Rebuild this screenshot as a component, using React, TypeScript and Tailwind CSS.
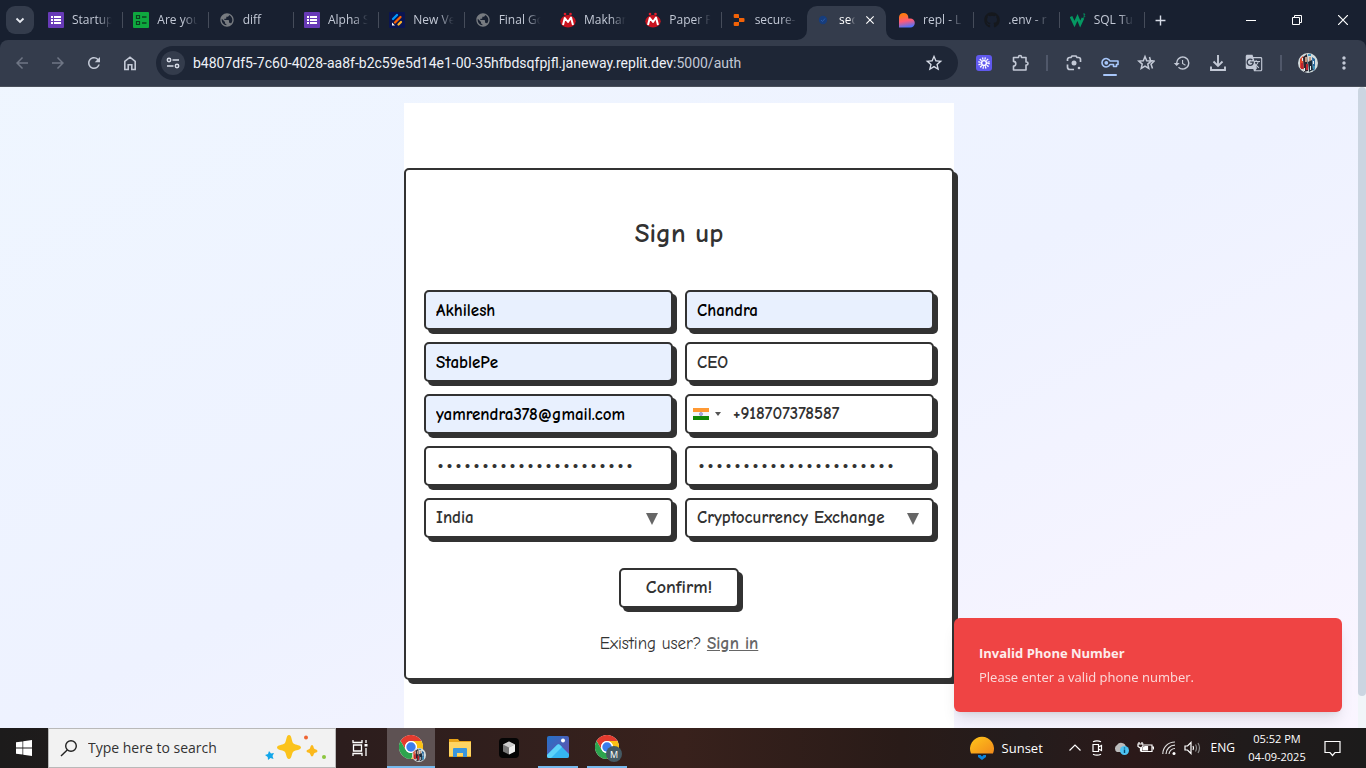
import React from "react";
import {
  MdArrowBack,
  MdArrowForward,
  MdRefresh,
  MdStarBorder,
  MdHistory,
  MdGTranslate,
  MdMoreVert,
  MdAdd,
  MdClose,
  MdPublic,
} from "react-icons/md";
import { FaGithub } from "react-icons/fa";

const ListIcon = () => (
  <svg viewBox="0 0 16 16" className="size-4">
    <rect width="16" height="16" rx="1" fill="#673ab7" />
    <path d="M3 4h2v2H3zM6 4h7v2H6zM3 7h2v2H3zM6 7h7v2H6zM3 10h2v2H3zM6 10h7v2H6z" fill="#fff" />
  </svg>
);

const ChecklistIcon = () => (
  <svg viewBox="0 0 16 16" className="size-4">
    <rect width="16" height="16" rx="1" fill="#0fa83f" />
    <path d="M3.5 3.5h3v3h-3zM3.5 9.5h3v3h-3z" fill="none" stroke="#0b4020" strokeWidth="1.2" />
    <path d="M9 5h4.500M9 11h4.500" stroke="#0b4020" strokeWidth="1.600" />
  </svg>
);

const GlobeIcon = () => <MdPublic className="size-4 text-[#777b80]" />;

const VentureIcon = () => (
  <svg viewBox="0 0 16 16" className="size-4">
    <rect width="16" height="16" rx="1" fill="#0a1551" />
    <g strokeLinecap="round" strokeWidth="2.300">
      <path d="M4 7 8 3" stroke="#0099ff" />
      <path d="M6 10.500 11.500 5" stroke="#ff6100" />
      <path d="M9.500 12.500 12 10" stroke="#ffb629" />
    </g>
    <path d="M3 10.500v3h3z" fill="#fff" />
  </svg>
);

const MakhanaIcon = () => (
  <svg viewBox="0 0 16 16" className="size-4">
    <circle cx="5" cy="2" r="1.300" fill="#e21d2b" />
    <circle cx="10.500" cy="2" r="1.300" fill="#e21d2b" />
    <ellipse cx="8" cy="9.300" rx="7.700" ry="6.200" fill="#c9131f" />
    <path d="M3 13 4.800 6 8 10 11 5.500 13 13" fill="none" stroke="#fff" strokeWidth="2" strokeLinejoin="round" />
  </svg>
);

const ReplitIcon = () => (
  <svg viewBox="0 0 16 16" className="size-4">
    <path
      d="M3.700 2H7a1 1 0 0 1 1 1v3H3.700a1 1 0 0 1-1-1V3a1 1 0 0 1 1-1zM8 6h4.500a1 1 0 0 1 1 1v2a1 1 0 0 1-1 1H8zM3.700 10H8v3a1 1 0 0 1-1 1H3.700a1 1 0 0 1-1-1v-2a1 1 0 0 1 1-1z"
      fill="#f26207"
    />
  </svg>
);

const HeartIcon = () => (
  <svg viewBox="0 0 16 16" className="size-4">
    <defs>
      <linearGradient id="heart" x1="0.300" y1="0" x2="0.500" y2="1">
        <stop offset="0.100" stopColor="#ff7a10" />
        <stop offset="0.550" stopColor="#ff5a78" />
        <stop offset="1" stopColor="#4b73ff" />
      </linearGradient>
    </defs>
    <path d="M0 15.500V5a4.700 4.700 0 0 1 9.300 0v1.500h2a4.500 4.500 0 0 1 0 9z" fill="url(#heart)" />
  </svg>
);

const SchoolsIcon = () => (
  <svg viewBox="0 0 16 16" className="size-4">
    <path d="M1 4.500 4.500 12 7.500 5.500 10.200 12 13 6" fill="none" stroke="#059862" strokeWidth="2.800" />
    <path d="M13 2h2l-1 1.500q1.500.5.5 1.500l-1.500.2" fill="none" stroke="#059862" strokeWidth=".8" />
  </svg>
);

const ShieldDotIcon = () => (
  <svg viewBox="0 0 16 16" className="size-4">
    <circle cx="8" cy="8" r="4.200" fill="#173d7c" />
    <path d="m6 8 1.500 1.500L10 6.500" stroke="#2c5ba6" fill="none" />
  </svg>
);

type TabData = { title: string; icon: React.ReactNode };

const tabsBefore: TabData[] = [
  { title: "Startup", icon: <ListIcon /> },
  { title: "Are you", icon: <ChecklistIcon /> },
  { title: "diff", icon: <GlobeIcon /> },
  { title: "Alpha S", icon: <ListIcon /> },
  { title: "New Ve", icon: <VentureIcon /> },
  { title: "Final Go", icon: <GlobeIcon /> },
  { title: "Makhan", icon: <MakhanaIcon /> },
  { title: "Paper P", icon: <MakhanaIcon /> },
  { title: "secure-", icon: <ReplitIcon /> },
];

const tabsAfter: TabData[] = [
  { title: "repl - L", icon: <HeartIcon /> },
  { title: ".env - r", icon: <FaGithub className="size-4 text-[#15181d]" /> },
  { title: "SQL Tu", icon: <SchoolsIcon /> },
];

function Tab({ title, icon, divider = true }: TabData & { divider?: boolean }) {
  return (
    <button className="flex h-8 min-w-0 flex-1 items-center gap-2 pl-[10px] text-left">
      <span className="shrink-0">{icon}</span>
      <span className="w-11 whitespace-nowrap text-[#c3c9d6] [mask-image:linear-gradient(to_right,black_60%,transparent_95%)]">
        {title}
      </span>
      <span className={divider ? "ml-auto h-4 w-px bg-[#454c5a]" : "hidden"} />
    </button>
  );
}

function TabStrip() {
  return (
    <div className="flex h-10 items-center bg-[#182030] pl-[6px] text-xs">
      <button aria-label="Search tabs" className="mr-1 flex size-7 shrink-0 items-center justify-center rounded-[9px] bg-[#343c4c]">
        <svg viewBox="0 0 12 12" className="size-3">
          <path d="m2.500 4.500 3.500 3.500 3.500-3.500" fill="none" stroke="#e6e9f0" strokeWidth="1.800" />
        </svg>
      </button>
      <div className="flex w-[768px]">
        {tabsBefore.map((t, i) => (
          <Tab key={i} {...t} divider={i < 8} />
        ))}
      </div>
      <div className="relative ml-px mr-[3px] flex h-[34px] w-[79px] shrink-0 items-center self-end rounded-t-[10px] bg-[#343c4c] pb-[6px] pl-2">
        <svg viewBox="0 0 10 10" className="absolute -left-[10px] bottom-0 size-[10px]">
          <path d="M10 0v10H0A10 10 0 0 0 10 0z" fill="#343c4c" />
        </svg>
        <svg viewBox="0 0 10 10" className="absolute -right-[10px] bottom-0 size-[10px]">
          <path d="M0 0v10h10A10 10 0 0 1 0 0z" fill="#343c4c" />
        </svg>
        <ShieldDotIcon />
        <span className="ml-2 w-[18px] text-white [mask-image:linear-gradient(to_right,black_55%,transparent_90%)]">sec</span>
        <button aria-label="Close tab" className="ml-[6px]">
          <MdClose className="size-[14px] text-white" />
        </button>
      </div>
      <div className="flex w-64">
        {tabsAfter.map((t, i) => (
          <Tab key={i} {...t} />
        ))}
      </div>
      <button aria-label="New tab" className="ml-[7px]">
        <MdAdd className="size-[17px] text-[#d6dbe6]" />
      </button>
      <div className="ml-auto flex">
        <button aria-label="Minimize" className="flex h-10 w-[46px] items-center justify-center">
          <svg viewBox="0 0 10 10" className="size-[10px]"><path d="M0 5.500h10" stroke="#fff" /></svg>
        </button>
        <button aria-label="Restore" className="flex h-10 w-[46px] items-center justify-center">
          <svg viewBox="0 0 10 10" className="size-[10px]" fill="none" stroke="#fff">
            <path d="M.5 2.500h7v7h-7zM2.500 2V.5h7v7H8" />
          </svg>
        </button>
        <button aria-label="Close" className="flex h-10 w-[46px] items-center justify-center">
          <svg viewBox="0 0 10 10" className="size-[10px]"><path d="m0 0 10 10M10 0 0 10" stroke="#fff" strokeWidth="1.200" /></svg>
        </button>
      </div>
    </div>
  );
}

function ToolButton({ label, children }: { label: string; children: React.ReactNode }) {
  return (
    <button aria-label={label} className="relative flex h-9 w-9 shrink-0 items-center justify-center text-[#c3c9d6]">
      {children}
    </button>
  );
}

const ToolDivider = () => <span className="mx-2 h-4 w-[2px] shrink-0 bg-[#50586a]" />;

function Avatar({ className }: { className: string }) {
  return (
    <svg viewBox="0 0 20 20" className={className}>
      <defs>
        <clipPath id="face"><circle cx="10" cy="10" r="10" /></clipPath>
      </defs>
      <g clipPath="url(#face)">
        <rect width="20" height="20" fill="#d3dcdd" />
        <path d="M2 6l3-3 1 13-4-1z" fill="#e2492f" />
        <path d="M5 4l4-3 1 17-4 1z" fill="#2a2530" />
        <path d="M7 4h2v5H7zM11 4h2v5h-2z" fill="#c39a82" />
        <path d="M10 9l4-2 1 10-4 2z" fill="#1c2c3a" />
        <path d="M14 4l3 2v10l-2 2z" fill="#27679c" />
        <path d="M3 10h2v6H3zM8 11h2v6H8z" fill="#bd2430" />
        <path d="M4 5h1v3H4zM15 8h1v3h-1zM12 13h1v4h-1zM6 15h1v3H6z" fill="#e8eef0" />
        <path d="M15 13h2v3h-2zM10 1h3v2h-3z" fill="#3f93ba" />
      </g>
    </svg>
  );
}

function Toolbar() {
  return (
    <div className="bg-[#182030]">
      <div className="flex h-[47px] items-center rounded-t-lg border-b border-[#4a505b] bg-[#343c4c] px-1">
        <button aria-label="Back" className="flex h-9 w-9 items-center justify-center text-[#6f7685]"><MdArrowBack className="size-[18px]" /></button>
        <button aria-label="Forward" className="flex h-9 w-9 items-center justify-center text-[#6f7685]"><MdArrowForward className="size-[18px]" /></button>
        <ToolButton label="Reload"><MdRefresh className="size-[18px]" /></ToolButton>
        <ToolButton label="Home">
          <svg viewBox="0 0 16 16" className="size-4" fill="none" stroke="currentColor" strokeWidth="1.600">
            <path d="M2.800 6.300 8 2.200l5.200 4.100v8.200h-3.400V9.800H6.200v4.700H2.800z" />
          </svg>
        </ToolButton>
        <div className="mx-2 flex h-[34px] min-w-0 flex-1 items-center rounded-full bg-[#1e2636] pl-[5px] pr-[14px]">
          <button aria-label="View site information" className="mr-2 flex size-6 shrink-0 items-center justify-center rounded-full bg-[#343c4c]">
            <svg viewBox="0 0 14 14" className="size-[14px]" fill="none" stroke="#d6dbe6" strokeWidth="1.500">
              <circle cx="3" cy="4" r="1.700" /><path d="M6.500 4H13M1 10h6.500" /><circle cx="11" cy="10" r="1.700" />
            </svg>
          </button>
          <div className="flex-1 overflow-hidden whitespace-nowrap font-[Roboto,sans-serif] text-sm text-[#c3c9d6]">
            <span className="text-[#eef1f7]">b4807df5-7c60-4028-aa8f-b2c59e5d14e1-00-35hfbdsqfpjfl.janeway.replit.dev</span>:5000/auth
          </div>
          <button aria-label="Bookmark this tab"><MdStarBorder className="size-5 text-[#d6dbe6]" /></button>
        </div>
        <ToolButton label="Assistant extension">
          <svg viewBox="0 0 16 16" className="size-4">
            <rect width="16" height="16" rx="3" fill="#6059ee" />
            <circle cx="8" cy="8" r="4.500" fill="none" stroke="#fff" strokeWidth="2.600" strokeDasharray="1.180 1.176" />
            <circle cx="8" cy="8" r="2.400" fill="none" stroke="#fff" strokeWidth="1.400" />
          </svg>
        </ToolButton>
        <ToolButton label="Extensions">
          <svg viewBox="0 0 18 18" className="size-[18px]" fill="none" stroke="currentColor" strokeWidth="1.600" strokeLinejoin="round">
            <path d="M2.500 3.500h5V3a1.500 1.500 0 0 1 3 0v.5H15V8h.5a1.500 1.500 0 0 1 0 3H15v5H2.500v-4a2.300 2.300 0 0 0 0-4.600z" />
          </svg>
        </ToolButton>
        <ToolDivider />
        <ToolButton label="Search with Lens">
          <svg viewBox="0 0 16 16" className="size-4" fill="none" stroke="currentColor" strokeWidth="1.700">
            <path d="M1.500 6V4.500a2 2 0 0 1 2-2h1.500l1-1.500h4l1 1.500h1.500a2 2 0 0 1 2 2V7M1.500 9.500V12a2.500 2.500 0 0 0 2.500 2.500h4" />
            <circle cx="8" cy="8" r="2.500" fill="currentColor" stroke="none" /><circle cx="13" cy="13" r="1.300" fill="currentColor" stroke="none" />
          </svg>
        </ToolButton>
        <ToolButton label="Manage passwords">
          <svg viewBox="0 0 18 12" className="h-3 w-[18px]" fill="none" stroke="#a8c7fa" strokeWidth="1.600">
            <path d="M9 4h8v3.500h-1.500V9.500h-3V7.500H9A4.200 4.200 0 1 1 9 4z" strokeLinejoin="round" />
            <circle cx="5.300" cy="5.800" r="1.100" fill="#a8c7fa" />
          </svg>
          <span className="absolute bottom-[5px] h-[2px] w-[14px] rounded bg-[#a8c7fa]" />
        </ToolButton>
        <ToolButton label="Bookmarks">
          <svg viewBox="0 0 18 18" className="size-[18px]" fill="none" stroke="currentColor" strokeWidth="1.500">
            <path d="m8 2.500 1.700 4.200 4.500.4-3.400 3 1 4.400L8 12.200l-3.800 2.300 1-4.400-3.400-3 4.500-.4z" />
            <path d="m12.500 3 1 3.500 3.500.6-3 3 1.500 4.500" />
          </svg>
        </ToolButton>
        <ToolButton label="History"><MdHistory className="size-[18px]" /></ToolButton>
        <ToolButton label="Downloads">
          <svg viewBox="0 0 18 18" className="size-[18px]" fill="none" stroke="currentColor" strokeWidth="1.900">
            <path d="M9 1v10.500M4.500 7.500 9 12l4.500-4.500M2 12.500V16h14v-3.500" />
          </svg>
        </ToolButton>
        <ToolButton label="Translate"><MdGTranslate className="size-[18px]" /></ToolButton>
        <ToolDivider />
        <ToolButton label="Profile"><Avatar className="size-5" /></ToolButton>
        <ToolButton label="More options"><MdMoreVert className="size-5" /></ToolButton>
      </div>
    </div>
  );
}

const fieldBox = "h-10 w-full rounded-[5px] border-2 border-[#323232] px-[10px] font-bold shadow-[4px_4px_#323232] outline-none";

function TextField({ label, value, type = "text", filled = false }: { label: string; value: string; type?: string; filled?: boolean }) {
  return (
    <input
      aria-label={label}
      type={type}
      defaultValue={value}
      className={
        fieldBox +
        (filled ? " bg-[#e8f0fe] text-black" : " bg-white text-[#323232]") +
        (type === "password" ? " pt-[2px] font-['Liberation_Mono',monospace] text-[15px] font-normal" : " text-[17px]")
      }
    />
  );
}

function SelectField({ label, value }: { label: string; value: string }) {
  return (
    <div className="relative">
      <select aria-label={label} className={fieldBox + " appearance-none bg-white text-[17px] text-[#323232]"}>
        <option>{value}</option>
      </select>
      <svg viewBox="0 0 12 12" className="pointer-events-none absolute right-[15px] top-[15px] size-3">
        <path d="M0 0h12L6 12z" fill="#666" />
      </svg>
    </div>
  );
}

function PhoneField() {
  return (
    <div className="flex h-10 items-center rounded-[5px] border-2 border-[#323232] bg-white pl-[6px] shadow-[4px_4px_#323232]">
      <button type="button" aria-label="Country: India" className="flex items-center gap-[6px]">
        <svg viewBox="0 0 16 12" className="h-3 w-4">
          <path d="M0 0h16v4H0z" fill="#ff9933" /><path d="M0 4h16v4H0z" fill="#f4f4fb" /><path d="M0 8h16v4H0z" fill="#128807" />
          <circle cx="8" cy="6" r="1.600" fill="#a9a9dc" stroke="#7070b8" strokeWidth=".5" />
        </svg>
        <svg viewBox="0 0 6 4" className="h-1 w-[6px]"><path d="M0 0h6L3 4z" fill="#555" /></svg>
      </button>
      <input aria-label="Phone number" type="tel" defaultValue="+918707378587" className="ml-3 min-w-0 flex-1 bg-transparent text-[17px] font-bold text-[#323232] outline-none" />
    </div>
  );
}

function SignUpCard() {
  return (
    <form className="flex flex-col items-center rounded-[5px] border-2 border-[#323232] bg-white px-[18px] pb-[22px] pt-[42px] font-['Comic_Sans_MS','Comic_Neue','Open_Sans',sans-serif] text-[#323232] shadow-[4px_4px_#323232]">
      <h1 className="text-[27px] font-bold leading-[44px]">Sign up</h1>
      <div className="mt-[34px] grid w-full grid-cols-2 gap-3">
        <TextField label="First name" value="Akhilesh" filled />
        <TextField label="Last name" value="Chandra" filled />
        <TextField label="Company" value="StablePe" filled />
        <TextField label="Job title" value="CEO" />
        <TextField label="Email" value="yamrendra378@gmail.com" filled />
        <PhoneField />
        <TextField label="Password" value="abcdefghijklmnopqrstuv" type="password" />
        <TextField label="Confirm password" value="abcdefghijklmnopqrstuv" type="password" />
        <SelectField label="Country" value="India" />
        <SelectField label="Industry" value="Cryptocurrency Exchange" />
      </div>
      <button type="submit" className="mt-[30px] h-10 w-[120px] rounded-[5px] border-2 border-[#323232] bg-white text-lg font-bold shadow-[4px_4px_#323232]">
        Confirm!
      </button>
      <p className="mt-6 text-[17px] leading-6">
        Existing user?{" "}
        <a href="#sign-in" className="font-bold text-[#666] underline">Sign in</a>
      </p>
    </form>
  );
}

function Toast() {
  return (
    <div role="alert" className="absolute bottom-4 right-6 w-[388px] rounded-md bg-[#ef4444] px-[25px] py-[23px] text-[13px] leading-6 text-[#fdecec] shadow-lg">
      <div className="font-bold">Invalid Phone Number</div>
      <div className="opacity-90">Please enter a valid phone number.</div>
    </div>
  );
}

function Chrome({ badge }: { badge: React.ReactNode }) {
  return (
    <span className="relative">
      <svg viewBox="0 0 24 24" className="size-6">
        <circle cx="12" cy="12" r="12" fill="#fff" />
        <path d="M12 6h10.400A12 12 0 0 0 1.600 6l5.200 9A6 6 0 0 1 12 6z" fill="#e33b2e" />
        <path d="M17.200 15 12 24A12 12 0 0 0 22.400 6H12a6 6 0 0 1 5.200 9z" fill="#fbc116" />
        <path d="M6.800 15 1.600 6A12 12 0 0 0 12 24l5.200-9a6 6 0 0 1-10.400 0z" fill="#2da44e" />
        <circle cx="12" cy="12" r="6" fill="#fff" /><circle cx="12" cy="12" r="4.700" fill="#3b7ded" />
      </svg>
      <span className="absolute -bottom-[3px] -right-[3px]">{badge}</span>
    </span>
  );
}

function Taskbar() {
  return (
    <div className="flex h-10 items-stretch bg-[linear-gradient(to_right,#1c1b1b_0%,#2c1d1d_25%,#33201d_40%,#38211c_50%,#291b18_66%,#241c1c_75%,#2b1919_83%,#201b1b_91%,#1c1b1b_100%)] text-sm text-white">
      <button aria-label="Start" className="flex w-12 items-center justify-center">
        <svg viewBox="0 0 16 16" className="size-4" fill="#fff"><path d="M0 2.300 6.500 1.400v6.200H0zM7.200 1.300 16 0v7.600H7.200zM0 8.400h6.500v6.200L0 13.700zM7.200 8.400H16V16l-8.800-1.300z" /></svg>
      </button>
      <label className="flex w-72 items-center border border-[#b9b9b9] bg-[#f2f2f2] pl-[11px] pr-2">
        <svg viewBox="0 0 18 18" className="size-[18px] shrink-0" fill="none" stroke="#222" strokeWidth="1.400"><circle cx="11" cy="7" r="5.300" /><path d="M7.200 11 1 17" /></svg>
        <input aria-label="Search" placeholder="Type here to search" className="ml-[10px] w-0 min-w-0 flex-1 bg-transparent text-sm outline-none placeholder:text-[#333]" />
        <svg viewBox="0 0 62 26" className="h-[26px] w-[62px] shrink-0">
          <path d="M24 0c3 0 2.500 7 4.500 8.500S36 10 36 12.500 30.500 15 28.500 16.500 27 24 24 24s-2.500-6-4.500-7.500S12 15 12 12.500 17.500 10 19.500 8.500 21 0 24 0z" fill="#fbc31c" />
          <path d="M47 10c1.500 0 1.500 3 2.300 3.700s3.200.8 3.200 2.300-2.400 1.500-3.200 2.300S48.500 21.500 47 21.500s-1.500-2.500-2.300-3.200-3.200-.8-3.200-2.300 2.400-1.500 3.200-2.300S45.500 10 47 10z" fill="#fbb91c" />
          <path d="m4 16 2 2.500 3-.5-1.500 3L8.500 24l-3-1L3 25l-.300-3L0 20l3-1z" fill="#12a6ea" />
          <circle cx="41" cy="2.500" r="2" fill="#ee6432" /><circle cx="59" cy="22" r="2" fill="#8cc63f" />
        </svg>
      </label>
      <button aria-label="Task view" className="flex w-[51px] items-center justify-center pr-1">
        <svg viewBox="0 0 16 16" className="size-4" fill="none" stroke="#fff" strokeWidth="1.300"><path d="M1 0v2.500h9V0M1.500 5h8v6h-8zM1 16v-2.500h9V16M14 0v3M14 8v8" /><path d="M12.500 4h3v2.500h-3z" fill="#fff" stroke="none" /></svg>
      </button>
      <button aria-label="Chrome" className="flex w-12 items-center justify-center border-b-2 border-[#76b9ed] bg-[#5e5253]">
        <Chrome badge={<Avatar className="size-[14px]" />} />
      </button>
      <button aria-label="File Explorer" className="flex w-[49px] items-center justify-center">
        <svg viewBox="0 0 22 20" className="h-5 w-[22px]">
          <path d="M0 1h9l1.500 2H22v16H0z" fill="#e8a317" /><path d="M0 4h22v14H0z" fill="#ffd562" />
          <path d="M4 19v-8a1 1 0 0 1 1-1h12a1 1 0 0 1 1 1v8h-4v-4H8v4z" fill="#3a96dd" />
        </svg>
      </button>
      <button aria-label="Cursor" className="flex w-[49px] items-center justify-center">
        <svg viewBox="0 0 20 20" className="size-5"><rect width="20" height="20" rx="4" fill="#050505" /><path d="m10 3.500 6 3v7l-6 3-6-3v-7z" fill="#777" /><path d="m4 6.500 6-3 6 3-6 3z" fill="#ccc" /><path d="M16 6.500v7l-6 3v-7z" fill="#eee" /></svg>
      </button>
      <button aria-label="Photos" className="ml-[5px] flex w-10 items-center justify-center border-b-2 border-[#76b9ed]">
        <svg viewBox="0 0 22 22" className="size-[22px]">
          <defs>
            <linearGradient id="sky" x1="0" y1="0" x2="1" y2="1"><stop offset="0" stopColor="#2472c8" /><stop offset="1" stopColor="#6b4eaa" /></linearGradient>
            <clipPath id="photo"><rect width="22" height="22" rx="2" /></clipPath>
          </defs>
          <g clipPath="url(#photo)">
            <rect width="22" height="22" fill="url(#sky)" /><path d="M0 19 10 9q1.500-1.500 3 0l9 9v4H0z" fill="#35b6f2" /><path d="M0 19 10 9q1.500-1.500 3 0l2 2L4 22H0z" fill="#5cd3fa" /><circle cx="16" cy="4.500" r="2" fill="#fff" />
          </g>
        </svg>
      </button>
      <button aria-label="Chrome, profile M" className="ml-[9px] flex w-10 items-center justify-center border-b-2 border-[#76b9ed]">
        <Chrome badge={<span className="flex size-4 items-center justify-center rounded-full bg-[#455a64] text-[9px] leading-none">M</span>} />
      </button>
      <div className="ml-auto flex items-center">
        <svg viewBox="0 0 24 24" className="size-6">
          <defs><linearGradient id="sun" x1="0" y1="0" x2="1" y2="1"><stop offset="0" stopColor="#ffc61a" /><stop offset="1" stopColor="#f18a1b" /></linearGradient></defs>
          <path d="M1 17.500A12 12 0 1 1 23 17.500z" fill="url(#sun)" /><path d="M8 19h2.500l1.500 1.500 1.500-1.500H16v2l-4 3-4-3z" fill="#0b85dd" />
        </svg>
        <span className="ml-2 w-[50px] text-[13px]">Sunset</span>
        <div className="ml-[17px] flex items-center gap-2">
          <svg viewBox="0 0 12 12" className="size-3" fill="none" stroke="#fff" strokeWidth="1.200"><path d="m.5 8.500 5.500-5.500 5.500 5.500" /></svg>
          <svg viewBox="0 0 16 16" className="size-4" fill="none" stroke="#fff" strokeWidth="1.200"><path d="M4 4.500h5.500v7H4zM9.500 7l3-1.500v5l-3-1.500M4 1.800q4-2 8 0M4 14.200q4 2 8 0" /></svg>
          <svg viewBox="0 0 16 14" className="h-[14px] w-4"><path d="M4 11a4 4 0 0 1 0-7 5 5 0 0 1 9 2l-3 5z" fill="#bbb" /><circle cx="11.500" cy="9.500" r="4.500" fill="#4cc2f1" /><path d="M11.500 8.500V12M11.500 6.500v1" stroke="#064a70" strokeWidth="1.400" /></svg>
          <svg viewBox="0 0 17 14" className="h-[14px] w-[17px]" fill="none" stroke="#fff" strokeWidth="1.200"><path d="M7 4h8v6.500H4.500V7M15.500 6h1v2.500M1 3h5v2.500L3.500 7 1 5.500zM2 1v2M5 1v2M3.500 7v3.500" /><path d="M8 5.500h2.500v3.500H6V7z" fill="#fff" /></svg>
          <svg viewBox="0 0 14 14" className="size-[14px]" fill="none" stroke="#ddd" strokeWidth="1.200"><path d="M.8 13A12 12 0 0 1 13 1M4 13a9 9 0 0 1 9-8.800M7 13a6 6 0 0 1 6-5.500" /><circle cx="12" cy="12.500" r="1.500" fill="#fff" stroke="none" /></svg>
          <svg viewBox="0 0 17 14" className="h-[14px] w-[17px]" fill="none" stroke="#fff" strokeWidth="1.200"><path d="M1 5h2.500L7 1.500v11L3.500 9H1z" /><path d="M9 5q1 2 0 4" /><path d="M11.500 3.500q2 3.500 0 7M14 2q3 5 0 10" stroke="#888" /></svg>
        </div>
        <span className="ml-[10px] text-xs">ENG</span>
        <div className="ml-3 w-[60px] whitespace-nowrap text-center text-[11px] leading-[18px]">
          <div>05:52 PM</div>
          <div>04-09-2025</div>
        </div>
        <button aria-label="Notifications" className="ml-[17px] mr-[25px]">
          <svg viewBox="0 0 17 17" className="size-[17px]" fill="none" stroke="#fff" strokeWidth="1.200"><path d="M1 1.500h15v11h-5L8.500 15.500 6 12.500H1z" /></svg>
        </button>
      </div>
    </div>
  );
}

export default function App() {
  return (
    <div className="flex h-screen flex-col overflow-hidden font-['Segoe_UI','Open_Sans',sans-serif]">
      <header>
        <TabStrip />
        <Toolbar />
      </header>
      <main className="relative flex min-h-0 flex-1 overflow-hidden bg-linear-to-br from-blue-50 via-indigo-50 to-purple-50">
        <div className="flex-1 pt-4">
          <div className="mx-auto min-h-full w-[550px] max-w-full bg-white pt-[65px]">
            <SignUpCard />
          </div>
        </div>
        <div className="w-2 bg-[#f1f5f9]">
          <div className="h-[95%] rounded-full bg-[#cbd5e1]" />
        </div>
        <Toast />
      </main>
      <Taskbar />
    </div>
  );
}
